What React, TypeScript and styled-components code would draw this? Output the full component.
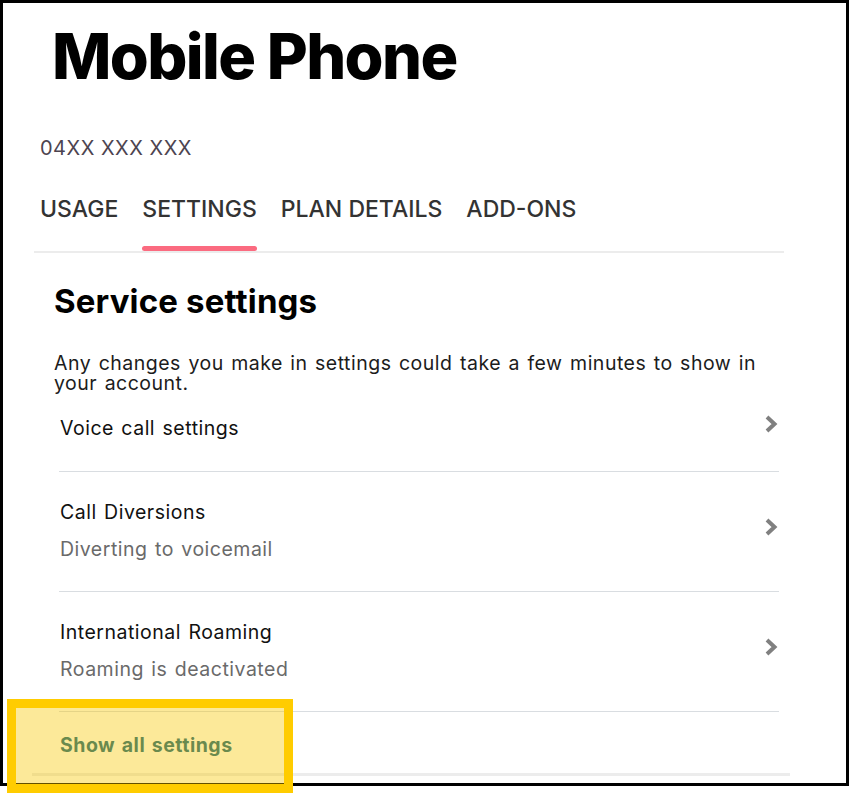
import React from "react";
import styled, { createGlobalStyle } from "styled-components";

const Global = createGlobalStyle`
  html, body { margin: 0; padding: 0; background: #ffffff; }
  body { font-family: Inter, "Liberation Sans", sans-serif; color: #1a1a1a; }
  * { box-sizing: border-box; }
`;

const Page = styled.div`
  position: relative;
  width: 849px;
  height: 794px;
  background: #fff;
`;

const Frame = styled.div`
  width: 849px;
  height: 786px;
  border: 3px solid #000;
  overflow: hidden;
  background: #fff;
`;

const Header = styled.header`
  padding: 0 0 0 37px;
`;

const Title = styled.h1`
  margin: 21px 0 0 12px;
  font-weight: 800;
  font-size: 63px;
  line-height: 64px;
  color: #000;
  letter-spacing: -1.6px;
`;

const Number = styled.div`
  margin-top: 48px;
  font-size: 20px;
  line-height: 24px;
  color: #4d4450;
  letter-spacing: 0.5px;
`;

const TabBar = styled.nav`
  margin: 35px 0 0 31px;
  width: 750px;
  padding-left: 6px;
  display: flex;
  gap: 24px;
  border-bottom: 2px solid #ececec;
`;

const Tab = styled.div<{ $active?: boolean }>`
  position: relative;
  font-size: 23px;
  line-height: 28px;
  font-weight: 500;
  color: #333;
  letter-spacing: 0;
  padding-bottom: 28px;
  &::after {
    content: "";
    position: absolute;
    left: 0;
    right: 0;
    bottom: 0;
    height: 5px;
    border-radius: 3px;
    background: ${(p) => (p.$active ? "#fb6b80" : "transparent")};
  }
`;

const Section = styled.section`
  padding-left: 51px;
`;

const SectionTitle = styled.h2`
  margin: 28px 0 0;
  font-weight: 700;
  font-size: 33px;
  line-height: 40px;
  color: #000;
  letter-spacing: 0.15px;
`;

const bodyText = `
  font-size: 19.5px;
  letter-spacing: 0.5px;
  word-spacing: 1.5px;
`;

const Intro = styled.p`
  margin: 32px 0 0;
  ${bodyText}
  line-height: 20px;
  color: #1c1c1c;
  max-width: 716px;
`;

const List = styled.div`
  margin: 0 0 0 56px;
  width: 720px;
`;

const Row = styled.div<{ $first?: boolean }>`
  display: flex;
  align-items: center;
  justify-content: space-between;
  padding: ${(p) => (p.$first ? "23px 1px 31px 1px" : "28px 1px 30px 1px")};
  border-bottom: 1px solid #d9dde1;
`;

const RowText = styled.div`
  display: flex;
  flex-direction: column;
  gap: 13px;
`;

const RowTitle = styled.div`
  ${bodyText}
  line-height: 24px;
  color: #111;
`;

const RowSub = styled.div`
  ${bodyText}
  line-height: 24px;
  color: #6a6a6a;
`;

const Chevron = styled.svg`
  flex: none;
  transform: translateY(-4px);
`;

const ShowAll = styled.div`
  padding: 21px 1px 16px;
  ${bodyText}
  line-height: 24px;
  font-weight: 700;
  color: #0a6183;
`;

const BottomBar = styled.div`
  margin-left: 29px;
  width: 758px;
  height: 3px;
  background: #ececec;
`;

const Highlight = styled.div`
  position: absolute;
  left: 7px;
  top: 699px;
  width: 286px;
  height: 94px;
  border: 9px solid #ffcc00;
  background: rgba(247, 200, 0, 0.4);
  pointer-events: none;
`;

const ChevronIcon = () => (
  <Chevron width="14" height="18" viewBox="0 0 14 18">
    <polyline points="3,2 10.5,9 3,16" fill="none" stroke="#808080" strokeWidth="4" />
  </Chevron>
);

const rows = [
  { title: "Voice call settings" },
  { title: "Call Diversions", sub: "Diverting to voicemail" },
  { title: "International Roaming", sub: "Roaming is deactivated" },
];

export default function App() {
  return (
    <Page>
      <Global />
      <Frame>
        <Header>
          <Title>Mobile Phone</Title>
          <Number>04XX XXX XXX</Number>
        </Header>
        <TabBar>
          <Tab>USAGE</Tab>
          <Tab $active>SETTINGS</Tab>
          <Tab>PLAN DETAILS</Tab>
          <Tab>ADD-ONS</Tab>
        </TabBar>
        <Section>
          <SectionTitle>Service settings</SectionTitle>
          <Intro>
            Any changes you make in settings could take a few minutes to show in your account.
          </Intro>
        </Section>
        <List>
          {rows.map((r, i) => (
            <Row key={r.title} $first={i === 0}>
              <RowText>
                <RowTitle>{r.title}</RowTitle>
                {r.sub && <RowSub>{r.sub}</RowSub>}
              </RowText>
              <ChevronIcon />
            </Row>
          ))}
          <ShowAll>Show all settings</ShowAll>
        </List>
        <BottomBar />
      </Frame>
      <Highlight />
    </Page>
  );
}
